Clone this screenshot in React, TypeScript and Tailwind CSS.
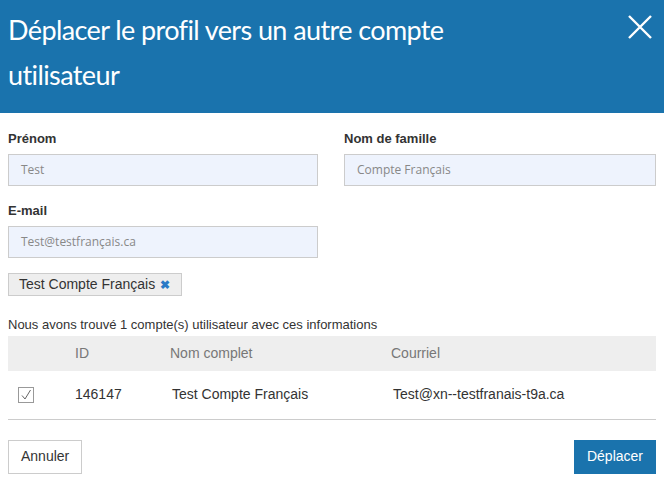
function Field({ label, value }: { label: string; value: string }) {
  return (
    <div className="flex flex-col">
      <label className="text-[13px] font-bold leading-[16px] text-[#333]">{label}</label>
      <div className="mt-[7px] flex h-[32px] items-center border border-[#ccc] bg-[#eef3fd] px-[12px] font-['Open_Sans'] text-[12px] text-[#888]">
        {value}
      </div>
    </div>
  );
}

export default function App() {
  return (
    <div className="flex h-[483px] w-[664px] flex-col bg-white font-['Liberation_Sans',Arial,sans-serif] text-[#333]">
      {/* Header */}
      <header className="flex h-[113px] items-start justify-between bg-[#1a73ad] pl-[8px] pr-[11px] pt-[7px]">
        <h1 className="font-['Lato',sans-serif] text-[27px] leading-[45px] tracking-[-0.6px] text-white">
          Déplacer le profil vers un autre compte
          <br />
          utilisateur
        </h1>
        <svg className="mt-[7px] shrink-0" width="26" height="26" viewBox="0 0 26 26" fill="none">
          <path d="M2 2 L24 24 M24 2 L2 24" stroke="white" strokeWidth="2.4" />
        </svg>
      </header>

      <main className="flex flex-1 flex-col px-[8px] pt-[18px]">
        <div className="grid grid-cols-[310px_312px] gap-x-[26px] gap-y-[17px]">
          <Field label="Prénom" value="Test" />
          <Field label="Nom de famille" value="Compte Français" />
          <Field label="E-mail" value="Test@testfrançais.ca" />
        </div>

        <div className="mt-[15px] flex">
          <span className="flex h-[23px] items-center gap-[5px] border border-[#ccc] bg-[#eee] pl-[10px] pr-[11px] text-[14px] text-[#333]">
            Test Compte Français
            <span className="text-[12px] font-bold text-[#2a7ac6]">✖</span>
          </span>
        </div>

        <p className="mt-[20px] text-[13px] leading-[18px] text-[#333]">
          Nous avons trouvé 1 compte(s) utilisateur avec ces informations
        </p>

        <table className="mt-[2px] w-full border-b border-[#ccc] text-left text-[14px]">
          <thead>
            <tr className="h-[35px] bg-[#eee] text-[#777]">
              <th className="w-[67px] font-normal"></th>
              <th className="w-[95px] font-normal">ID</th>
              <th className="w-[221px] font-normal">Nom complet</th>
              <th className="font-normal">Courriel</th>
            </tr>
          </thead>
          <tbody>
            <tr className="h-[48px] text-[#333]">
              <td className="pl-[10px]">
                <span className="flex h-[16px] w-[16px] items-center justify-center border border-[#999] bg-white">
                  <svg width="12" height="12" viewBox="0 0 12 12" fill="none">
                    <path d="M2 6.5 L5 10 L10.5 1" stroke="#666" strokeWidth="1" />
                  </svg>
                </span>
              </td>
              <td>146147</td>
              <td className="pl-[2px]">Test Compte Français</td>
              <td className="pl-[2px]">Test@xn--testfranais-t9a.ca</td>
            </tr>
          </tbody>
        </table>

        <div className="mt-[20px] flex justify-between">
          <button className="h-[34px] border border-[#ccc] bg-white px-[12px] text-[14px] text-[#333]">Annuler</button>
          <button className="h-[34px] bg-[#1a73ad] px-[13px] text-[14px] text-white">Déplacer</button>
        </div>
      </main>
    </div>
  );
}
